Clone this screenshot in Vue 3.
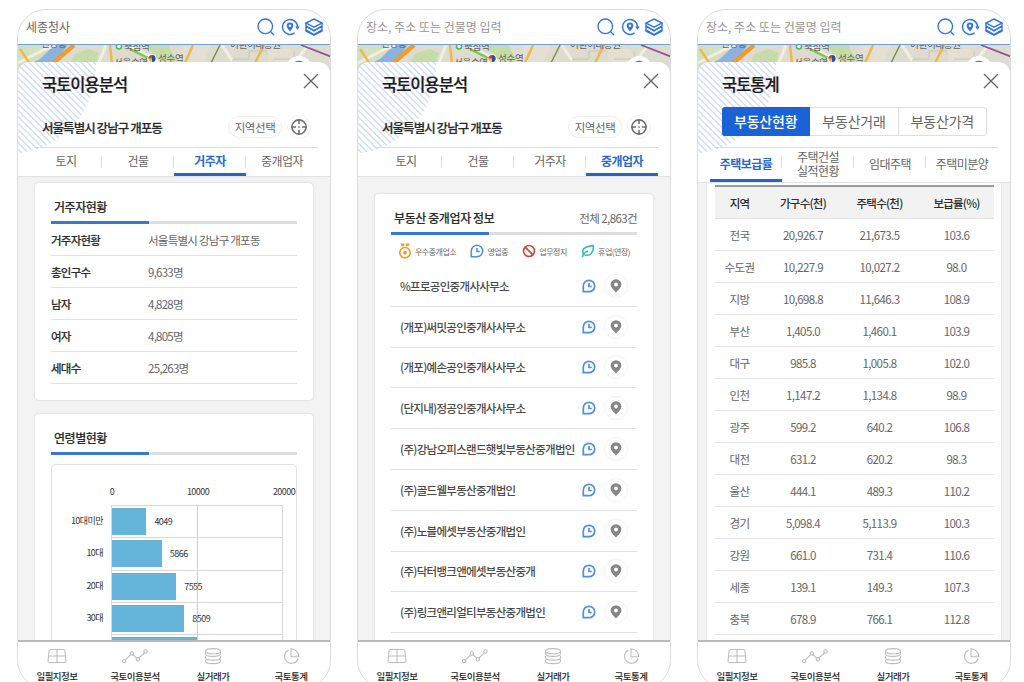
<script setup>
import { ref } from 'vue';

const phones = ref([
    { id: 'resident', title: '국토이용분석', keyword: '세종청사', active: '거주자' },
    { id: 'agent', title: '국토이용분석', keyword: '', active: '중개업자' },
    { id: 'stats', title: '국토통계', keyword: '', active: '주택보급률' },
]);

const tabs = ['토지', '건물', '거주자', '중개업자'];
const segments = ['부동산현황', '부동산거래', '부동산가격'];
const statTabs = ['주택보급률', '주택건설\n실적현황', '임대주택', '주택미분양'];

const residents = [
    { label: '거주자현황', value: '서울특별시 강남구 개포동' },
    { label: '총인구수', value: '9,633명' },
    { label: '남자', value: '4,828명' },
    { label: '여자', value: '4,805명' },
    { label: '세대수', value: '25,263명' },
];

const maxAge = 20000;
const ages = [
    { label: '10대미만', value: 4049 },
    { label: '10대', value: 5866 },
    { label: '20대', value: 7555 },
    { label: '30대', value: 8509 },
];
const nextAge = 9980;

const legends = [
    { icon: 'medal', label: '우수중개업소' },
    { icon: 'clock', label: '영업중' },
    { icon: 'stop', label: '업무정지' },
    { icon: 'leaf', label: '휴업(연장)' },
];

const agents = [
    '%프로공인중개사사무소',
    '(개포)써밋공인중개사사무소',
    '(개포)예손공인중개사사무소',
    '(단지내)정공인중개사사무소',
    '(주)강남오피스랜드햇빛부동산중개법인',
    '(주)골드웰부동산중개법인',
    '(주)노블에셋부동산중개법인',
    '(주)닥터뱅크앤에셋부동산중개',
    '(주)링크앤리얼티부동산중개법인',
];

const heads = ['지역', '가구수(천)', '주택수(천)', '보급률(%)'];
const rows = [
    ['전국', '20,926.7', '21,673.5', '103.6'],
    ['수도권', '10,227.9', '10,027.2', '98.0'],
    ['지방', '10,698.8', '11,646.3', '108.9'],
    ['부산', '1,405.0', '1,460.1', '103.9'],
    ['대구', '985.8', '1,005.8', '102.0'],
    ['인천', '1,147.2', '1,134.8', '98.9'],
    ['광주', '599.2', '640.2', '106.8'],
    ['대전', '631.2', '620.2', '98.3'],
    ['울산', '444.1', '489.3', '110.2'],
    ['경기', '5,098.4', '5,113.9', '100.3'],
    ['강원', '661.0', '731.4', '110.6'],
    ['세종', '139.1', '149.3', '107.3'],
    ['충북', '678.9', '766.1', '112.8'],
];

const menus = [
    { icon: 'land', label: '일필지정보' },
    { icon: 'graph', label: '국토이용분석' },
    { icon: 'coins', label: '실거래가' },
    { icon: 'pie', label: '국토통계' },
];

const barWidth = value => `${value / maxAge * 100}%`;
</script>

<template>
  <main>
    <svg class="defs">
        <symbol id="search" viewBox="0 0 20 20">
            <circle cx="9.3" cy="9.3" r="7.3" /><path d="M14.7 14.7L18 18" />
        </symbol>
        <symbol id="locate" viewBox="0 0 20 20">
            <path d="M14.6 15.9A7.5 7.5 0 1 1 17.500 10" />
            <path class="fill" d="M15.200 9.600h4.600l-2.300 3.200z" />
            <path class="fill" fill-rule="evenodd" d="M10 14.4C8 12 6.700 10.4 6.700 8.700a3.3 3.3 0 0 1 6.6 0C13.3 10.4 12 12 10 14.4zM10 7.400a1.3 1.3 0 1 0 0 2.6a1.3 1.3 0 0 0 0-2.6z" />
        </symbol>
        <symbol id="layers" viewBox="0 0 20 20">
            <path d="M10 2L18 6L10 10.2L2 6z" />
            <path d="M2 6v3.2l8 4.3 8-4.3V6M2 9.8v3l8 4.700 8-4.700v-3" />
            <path d="M2 9.200l8 4.800 8-4.800M2 12.800v1.200l8 4.200 8-4.200v-1.200" />
        </symbol>
        <symbol id="close" viewBox="0 0 16 16"><path d="M1 1l14 14M15 1L1 15" /></symbol>
        <symbol id="target" viewBox="0 0 18 18">
            <circle cx="9" cy="9" r="7.1" />
            <path d="M9 1v5M9 12v5M1 9h5M12 9h5M8.2 9h1.6" />
        </symbol>
        <symbol id="medal" viewBox="0 0 14 16">
            <circle cx="7" cy="9.700" r="5.200" />
            <circle cx="7" cy="9.700" r="1.900" class="fill" />
            <path class="fill" d="M2.500 .5h3.800v2.700H3.500zM7.700 .5h3.800l-1 2.700H7.700z" />
        </symbol>
        <symbol id="clock" viewBox="0 0 14 14">
            <path d="M1.300 12.700V7A5.700 5.700 0 1 1 7 12.700z" /><path d="M7 4v3.5h2.8" />
        </symbol>
        <symbol id="stop" viewBox="0 0 14 14">
            <circle cx="7" cy="7" r="5.500" /><path d="M3.1 3.1l7.8 7.8" />
        </symbol>
        <symbol id="leaf" viewBox="0 0 14 14">
            <path d="M1.4 13.2c.8-3 2.6-5.2 5.6-6.2M2.5 10.8C.2 5 3.2 2.5 12.3 1.6C13 8.5 9.2 12.7 3.6 11" />
        </symbol>
        <symbol id="pin" viewBox="0 0 12 14">
            <path class="fill" fill-rule="evenodd" d="M6 13.6C4.3 11.6.6 8.6.6 5.6a5.4 5.4 0 0 1 10.8 0C11.4 8.6 7.7 11.6 6 13.6zM6 3.4a2 2 0 1 0 0 4a2 2 0 0 0 0-4z" />
        </symbol>
        <symbol id="land" viewBox="0 0 26 18">
            <path d="M6.5 2.5h13q1.2 0 1.4 1.2L22 14q0 1.5-1.5 1.5h-15Q4 15.5 4 14L5.1 3.7Q5.3 2.5 6.5 2.5zM13 2.5v13M4.7 9h16.6" />
        </symbol>
        <symbol id="graph" viewBox="0 0 26 18">
            <circle cx="2.2" cy="14" r="1.700" /><circle cx="9.8" cy="6.5" r="1.700" />
            <circle cx="15.8" cy="12.300" r="1.700" /><circle cx="23.5" cy="4.500" r="1.700" />
            <path d="M3.5 12.8l5-5M11 7.700l3.6 3.4M17 11l5.3-5.2" />
        </symbol>
        <symbol id="coins" viewBox="0 0 26 18">
            <ellipse cx="13" cy="4.2" rx="7.5" ry="2.6" />
            <path d="M5.5 4.2v2.5c0 3.5 15 3.5 15 0V4.2M5.5 9v1.500c0 3.5 15 3.5 15 0V9M5.5 12.500v1.500c0 3.5 15 3.5 15 0v-1.500" />
        </symbol>
        <symbol id="pie" viewBox="0 0 26 18">
            <path d="M10.5 3a7 7 0 1 0 9.7 8.5" /><path d="M13 1.8v8h7.7a7.7 7.7 0 0 0-7.7-8z" />
        </symbol>
    </svg>

    <section v-for="phone in phones" :key="phone.id" class="phone" :class="phone.id">
        <header class="search">
            <span class="keyword" v-if="phone.keyword">{{ phone.keyword }}</span>
            <span class="placeholder" v-else>장소, 주소 또는 건물명 입력</span>
            <svg class="icon"><use href="#search" /></svg>
            <svg class="icon"><use href="#locate" /></svg>
            <svg class="icon"><use href="#layers" /></svg>
        </header>

        <svg class="map" viewBox="0 0 312 32">
            <rect width="312" height="32" fill="#dedbcf" />
            <path d="M0 0h50L22 32H0z" fill="#d3dfc1" />
            <path d="M22 14L36 0H50L36 18H14z" fill="#8eb2df" />
            <path d="M57 9l14-5 10 4-3 10H52zM128 0h22l9 16-16 4z" fill="#c5dba9" />
            <path d="M165 0h28l-9 20h-22zM250 4h22l8 14h-30z" fill="#e4dfd0" />
            <g class="roads">
                <path d="M0 18L25 5l13-5M88 0l-8 20M110 0l35 19M204 0l13 20M290 0l-15 20" stroke="#f2efe2" stroke-width="3" />
                <path d="M215 20v-6h16v-8h18M256 14h20V7" stroke="#c8c4bc" />
                <path d="M34 19L56 0" stroke="#ee9b2f" stroke-width="4.5" />
                <path d="M2 4l10 15M92 0l2 19M175 0l-9 20M246 0l-10 20" stroke="#ecb94e" stroke-width="2.5" />
                <path d="M112 4l18 9" stroke="#72cc4a" stroke-width="2.5" />
                <path d="M202 0l-10 20" stroke="#7e8e55" stroke-width="1.5" />
                <path d="M283 0l31 12" stroke="#94559b" stroke-width="1.8" />
            </g>
            <circle cx="101" cy="1.500" r="3.300" fill="#46ba61" />
            <circle cx="101" cy="1.500" r="1.700" fill="#fff" />
            <circle cx="134" cy="13.5" r="4.500" fill="#fff" />
            <circle cx="134" cy="13.5" r="3.6" fill="#f5bd37" />
            <path d="M134 9.900a3.600 3.600 0 0 1 0 7.200z" fill="#284f9c" />
            <path d="M134 9.900a3.600 3.600 0 0 0-3.600 3.600h3.600z" fill="#d9412e" />
            <text x="140" y="17">성수역</text>
            <text x="96" y="20.5">서울숲역</text>
            <text x="106" y="5">뚝섬역</text>
            <text x="23" y="2">신당동</text>
            <text x="212" y="2.500">어린이대공원</text>
            <circle cx="281" cy="24" r="13" fill="#fff" />
            <g class="roads"><path d="M274 20q7-7 14 0M281 17v5" stroke="#2f74df" stroke-width="1.5" /></g>
        </svg>

        <div class="sheet">
            <div class="top">
                <div class="hatch"></div>
                <div class="heading">
                    <h2>{{ phone.title }}</h2>
                    <svg class="close"><use href="#close" /></svg>
                </div>
                <div class="segments" v-if="phone.id === 'stats'">
                    <span v-for="(name, i) in segments" :key="name" :class="{ on: i === 0 }">{{ name }}</span>
                </div>
                <div class="address" v-else>
                    <strong>서울특별시 강남구 개포동</strong>
                    <span class="pick">지역선택</span>
                    <span class="aim"><svg><use href="#target" /></svg></span>
                </div>
                <nav class="tabs">
                    <span
                        v-for="tab in phone.id === 'stats' ? statTabs : tabs"
                        :key="tab"
                        :class="{ on: tab === phone.active }"
                    ><b>{{ tab }}</b></span>
                </nav>
            </div>

            <div class="body" v-if="phone.id === 'resident'">
                <div class="card info">
                    <h3>거주자현황</h3>
                    <div class="rule"></div>
                    <dl v-for="item in residents" :key="item.label">
                        <dt>{{ item.label }}</dt>
                        <dd>{{ item.value }}</dd>
                    </dl>
                </div>
                <div class="card age">
                    <h3>연령별현황</h3>
                    <div class="rule"></div>
                    <div class="chart">
                        <div class="axis"><span>0</span><span>10000</span><span>20000</span></div>
                        <div class="bars">
                            <div class="bar-row" v-for="age in ages" :key="age.label">
                                <label>{{ age.label }}</label>
                                <div class="track">
                                    <div class="bar" :style="{ width: barWidth(age.value) }"></div>
                                    <span>{{ age.value }}</span>
                                </div>
                            </div>
                            <div class="bar-row">
                                <label></label>
                                <div class="track">
                                    <div class="bar" :style="{ width: barWidth(nextAge) }"></div>
                                </div>
                            </div>
                        </div>
                    </div>
                </div>
            </div>

            <div class="body" v-if="phone.id === 'agent'">
                <div class="card agents">
                    <div class="card-head">
                        <h3>부동산 중개업자 정보</h3>
                        <span>전체 2,863건</span>
                    </div>
                    <div class="rule"></div>
                    <div class="legend">
                        <span v-for="item in legends" :key="item.icon">
                            <svg :class="item.icon"><use :href="'#' + item.icon" /></svg>{{ item.label }}
                        </span>
                    </div>
                    <div class="agent-row" v-for="name in agents" :key="name">
                        <p>{{ name }}</p>
                        <svg class="clock"><use href="#clock" /></svg>
                        <span class="round"><svg class="pin"><use href="#pin" /></svg></span>
                    </div>
                </div>
            </div>

            <div class="body" v-if="phone.id === 'stats'">
                <div class="table">
                    <div class="tr th"><span v-for="head in heads" :key="head">{{ head }}</span></div>
                    <div class="tr" v-for="row in rows" :key="row[0]">
                        <span v-for="(cell, i) in row" :key="i">{{ cell }}</span>
                    </div>
                </div>
            </div>
        </div>

        <footer>
            <div v-for="menu in menus" :key="menu.icon">
                <svg><use :href="'#' + menu.icon" /></svg>
                <span>{{ menu.label }}</span>
            </div>
        </footer>
    </section>
  </main>
</template>

<style>
body {
    background-color: #fff;
    overflow: hidden;
}
</style>

<style scoped>
* {
    margin: 0;
    padding: 0;
    box-sizing: border-box;
}
main {
    width: 1024px;
    height: 682px;
    padding: 9px 13px 0 17px;
    overflow: hidden;
    display: flex;
    justify-content: space-between;
    font-family: 'Noto Sans CJK KR', sans-serif;
    color: #656565;
    white-space: nowrap;
}
.defs {
    position: absolute;
    width: 0;
    height: 0;
}
svg {
    display: block;
    fill: none;
    stroke: currentColor;
}
.fill {
    fill: currentColor;
    stroke: none;
}
.phone {
    width: 314px;
    height: 680px;
    border: 1px solid #dcdcdc;
    border-radius: 29px;
    overflow: hidden;
    display: flex;
    flex-direction: column;
    background: #fff;
}
.search {
    height: 35px;
    flex: none;
    display: flex;
    align-items: center;
    padding: 0 6px 0 8px;
    gap: 4px;
    border-bottom: 1.5px solid #6fa0d8;
    font-size: 12px;
    letter-spacing: 0;
}
.search span {
    flex: 1;
    padding-bottom: 2px;
}
.placeholder {
    color: #959595;
}
.search .icon {
    width: 20px;
    height: 20px;
    color: #2f74e8;
    stroke-width: 1.4;
}
.map {
    width: 312px;
    height: 32px;
    flex: none;
    margin-bottom: -15px;
    stroke: none;
}
.map text {
    fill: #63615e;
    font-size: 9.5px;
    letter-spacing: -0.3px;
}
.roads {
    fill: none;
}
.sheet {
    flex: 1;
    min-height: 0;
    display: flex;
    flex-direction: column;
    background: #f3f3f3;
    border-radius: 12px 12px 0 0;
    overflow: hidden;
    position: relative;
}
.top {
    background: #fff;
    height: 115px;
    flex: none;
    border-bottom: 1px solid #e2e2e2;
    position: relative;
    display: flex;
    flex-direction: column;
}
.stats .top {
    height: 121px;
}
.hatch {
    position: absolute;
    left: 0;
    top: 0;
    width: 80px;
    height: 92px;
    background: repeating-linear-gradient(45deg, #fff 0, #fff 2.2px, #d6e0f4 3px, #d6e0f4 3.8px, #fff 4.6px);
    clip-path: circle(87px at -9px 5px);
}
.heading {
    position: relative;
    height: 46px;
    flex: none;
    display: flex;
    justify-content: space-between;
    padding: 0 11px 0 24px;
}
h2 {
    font-size: 16.5px;
    line-height: 44px;
    letter-spacing: -1px;
    font-weight: 500;
    color: #1c1c1c;
    -webkit-text-stroke: 0.2px #1c1c1c;
}
.close {
    width: 16px;
    height: 16px;
    margin-top: 11px;
    color: #666;
    stroke-width: 1.4;
}
.address {
    position: relative;
    height: 40px;
    flex: none;
    margin: 0 12px 0 16px;
    padding: 0 7px 1px 8px;
    display: flex;
    align-items: center;
    border-bottom: 1px solid #dcdcdc;
}
.address strong {
    flex: 1;
    font-size: 12.5px;
    letter-spacing: -0.95px;
    font-weight: 500;
    color: #292929;
    -webkit-text-stroke: 0.2px #292929;
}
.pick {
    width: 54px;
    height: 22px;
    line-height: 20px;
    text-align: center;
    border: 1px solid #ededed;
    border-radius: 11px;
    font-size: 11.5px;
    letter-spacing: -0.4px;
    margin-right: 5px;
}
.aim, .round {
    width: 24px;
    height: 24px;
    border: 1px solid #f3f3f3;
    border-radius: 50%;
    display: flex;
    align-items: center;
    justify-content: center;
    color: #707070;
}
.aim svg {
    width: 18px;
    height: 18px;
    stroke-width: 1.6;
}
.tabs {
    flex: 1;
    margin: 0 12px;
    display: grid;
    grid-template-columns: repeat(4, 72px);
    font-size: 12px;
    letter-spacing: -0.5px;
    text-align: center;
}
.tabs span {
    display: flex;
    align-items: center;
    justify-content: center;
    border-bottom: 3px solid transparent;
    background: linear-gradient(#dcdcdc, #dcdcdc) right 8px / 1px 12px no-repeat;
}
.tabs span:last-child {
    background: none;
}
.tabs b {
    font-weight: 400;
    white-space: pre;
    line-height: 14px;
}
.resident .tabs b, .agent .tabs b {
    padding-top: 1px;
}
.tabs .on {
    border-color: #2364ce;
    color: #2568cf;
}
.tabs .on b {
    font-weight: 700;
}
.segments {
    position: relative;
    height: 41px;
    flex: none;
    margin: -1px 12px 0 16px;
    padding: 0 11px 12px 8px;
    border-bottom: 1px solid #dcdcdc;
    display: grid;
    grid-template-columns: repeat(3, 1fr);
    text-align: center;
    font-size: 14px;
    letter-spacing: -0.2px;
}
.segments span {
    line-height: 27px;
    border: 1px solid #dedede;
    border-left: none;
    background: #fff;
}
.segments .on {
    background: #1a62d6;
    border-color: #1a62d6;
    color: #fff;
    font-weight: 500;
    border-radius: 3px 0 0 3px;
}
.segments span:last-child {
    border-radius: 0 4px 4px 0;
}
.body {
    flex: 1;
    min-height: 0;
    padding: 5px 16px 0;
    overflow: hidden;
}
.card {
    background: #fff;
    border: 1px solid #e6e6e6;
    border-radius: 5px;
    box-shadow: 0 0 2px #e9e9e9;
    padding: 0 16px;
}
.info {
    height: 219px;
    margin-bottom: 12px;
}
.age {
    height: 300px;
}
h3 {
    height: 38px;
    padding: 0 3px;
    line-height: 48px;
    font-size: 12px;
    letter-spacing: -0.45px;
    font-weight: 500;
    color: #2b2b2b;
    -webkit-text-stroke: 0.15px #2b2b2b;
}
.rule {
    height: 3px;
    background: linear-gradient(to right, #3678d8 40%, #dedede 40%);
}
dl {
    display: grid;
    grid-template-columns: 97px 1fr;
    height: 32.1px;
    line-height: 32px;
    border-bottom: 1px solid #e2e2e2;
    font-size: 11.5px;
    letter-spacing: -0.75px;
}
dt {
    font-weight: 500;
    color: #2e2e2e;
    -webkit-text-stroke: 0.15px #2e2e2e;
}
.chart {
    height: 220px;
    margin-top: 9px;
    border: 1px solid #dfdfdf;
    border-radius: 5px;
    font-size: 9px;
    letter-spacing: -0.55px;
    color: #333;
}
.axis {
    margin: 17px -26px 0 17px;
    height: 23px;
    line-height: 19px;
    display: grid;
    grid-template-columns: repeat(3, 86px);
    text-align: center;
}
.bars {
    width: 231px;
}
.bar-row {
    display: grid;
    grid-template-columns: 59px 172px;
    height: 32.3px;
    line-height: 32px;
}
.bar-row label {
    text-align: right;
    padding-right: 8px;
}
.track {
    border: 1px solid #d6d6d6;
    border-width: 1px 1px 0 1px;
    display: flex;
    align-items: flex-start;
    gap: 8px;
    background: linear-gradient(#cfcfcf, #cfcfcf) 85px 0 / 1px 100% no-repeat;
}
.bar {
    height: 27px;
    margin-top: 2px;
    flex: none;
    background: #65b5da;
}
.agent .body {
    padding-top: 16px;
}
.agents {
    height: 480px;
}
.card-head {
    display: flex;
    justify-content: space-between;
    font-size: 11.5px;
    letter-spacing: -0.6px;
    line-height: 49px;
    height: 38px;
}
.card-head h3 {
    letter-spacing: -0.4px;
}
.legend {
    display: flex;
    justify-content: space-between;
    align-items: center;
    height: 31px;
    padding: 1px 7px 0 7px;
    font-size: 8px;
    letter-spacing: -0.5px;
}
.legend span {
    display: flex;
    align-items: center;
    gap: 3px;
}
.legend svg {
    width: 14px;
    height: 14px;
    stroke-width: 1.6;
}
.legend .medal {
    height: 16px;
    color: #f29a2a;
}
.clock {
    width: 14px;
    height: 14px;
    color: #4b8ef0;
    stroke-width: 1.7;
}
.stop {
    color: #cf4535;
}
.leaf {
    color: #35c1b3;
}
.agent-row {
    height: 40.8px;
    border-bottom: 1px solid #e0e0e0;
    display: flex;
    align-items: center;
    padding: 0 9px;
}
.agent-row p {
    flex: 1;
    font-size: 11.5px;
    letter-spacing: -0.7px;
    font-weight: 500;
    color: #4a4a4a;
}
.round {
    margin-left: 8px;
    color: #868686;
}
.pin {
    width: 12px;
    height: 14px;
}
.stats .body {
    padding: 0 8px;
}
.table {
    height: 100%;
    background: #fff;
    border: 1px solid #e6e6e6;
    border-width: 0 1px;
    padding: 2px 7px 0 8px;
}
.tr {
    height: 32px;
    line-height: 32px;
    border-bottom: 1px solid #e2e2e2;
    display: grid;
    grid-template-columns: 49px 78px 75px 79px;
    text-align: center;
    font-size: 11.5px;
    letter-spacing: -0.6px;
}
.th {
    height: 34px;
    border-top: 2px solid #9b9b9b;
    background: #f2f2f2;
    font-weight: 500;
    color: #2e2e2e;
    letter-spacing: -0.75px;
}
footer {
    height: 48px;
    flex: none;
    border-top: 2px solid #b9b9b9;
    display: grid;
    grid-template-columns: repeat(4, 78px);
    text-align: center;
}
footer svg {
    width: 26px;
    height: 18px;
    margin: 5px auto 0;
    color: #bdbdbd;
    stroke-width: 1.1;
}
footer span {
    display: block;
    margin-top: 3px;
    line-height: 16px;
    font-size: 9.5px;
    letter-spacing: -0.5px;
    font-weight: 500;
    color: #222;
}
</style>
